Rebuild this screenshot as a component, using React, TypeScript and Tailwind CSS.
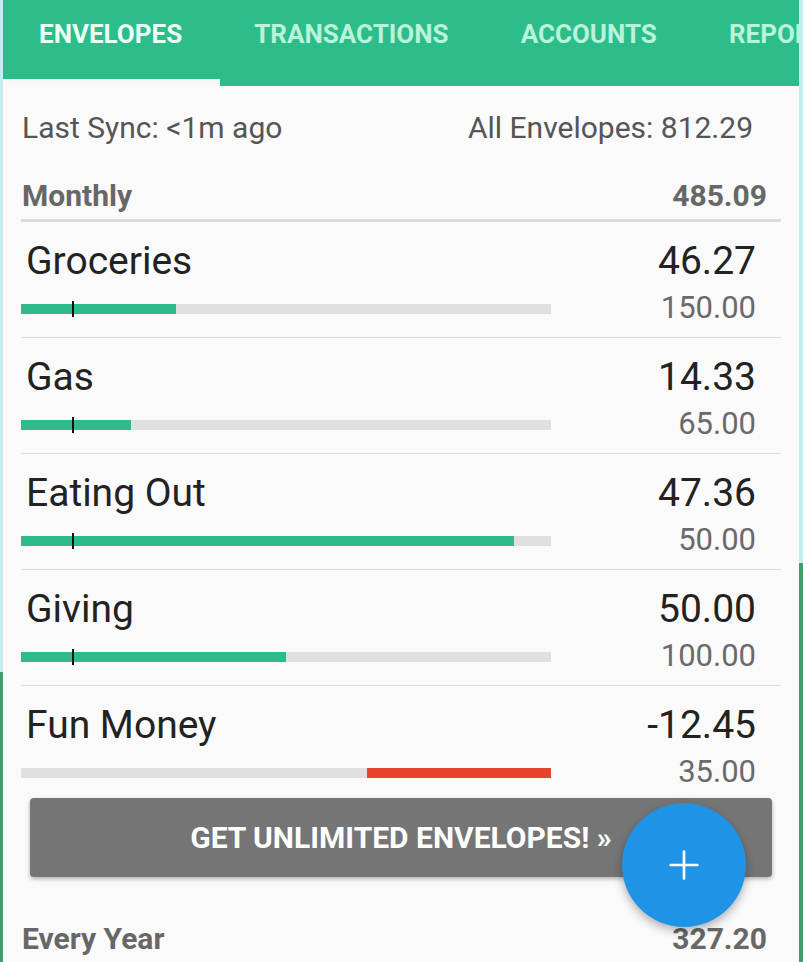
import { Plus } from 'lucide-react'

interface Envelope {
  name: string
  amount: string
  budget: string
  fill: number
  over?: boolean
}

const envelopes: Envelope[] = [
  { name: 'Groceries', amount: '46.27', budget: '150.00', fill: 155 },
  { name: 'Gas', amount: '14.33', budget: '65.00', fill: 110 },
  { name: 'Eating Out', amount: '47.36', budget: '50.00', fill: 493 },
  { name: 'Giving', amount: '50.00', budget: '100.00', fill: 265 },
  { name: 'Fun Money', amount: '-12.45', budget: '35.00', fill: 184, over: true },
]

const tabs = ['ENVELOPES', 'TRANSACTIONS', 'ACCOUNTS', 'REPORTS']

const EnvelopeRow = ({ env, last }: { env: Envelope; last: boolean }) => {
  return (
    <div className={`mx-[18px] pt-[16px] ${last ? 'pb-0' : 'pb-[7px] border-b border-[#dcdcdc]'}`}>
      <div className="flex h-[46px] items-center justify-between pl-[5px] pr-[25px] text-[39px] leading-none text-[#222]">
        <span>{env.name}</span>
        <span>{env.amount}</span>
      </div>
      <div className="flex h-[46px] items-center justify-between pr-[25px]">
        <div className="relative mt-[4px] h-[10px] w-[530px] bg-[#e0e0e0]">
          {env.over ? (
            <div className="absolute right-0 top-0 h-full bg-[#e8432f]" style={{ width: env.fill }} />
          ) : (
            <>
              <div className="absolute left-0 top-0 h-full bg-[#2dbb89]" style={{ width: env.fill }} />
              <div className="absolute left-[51px] top-[-3px] h-[16px] w-[2px] bg-[#111]" />
            </>
          )}
        </div>
        <span className="text-[31px] leading-none text-[#6a6a6a]">{env.budget}</span>
      </div>
    </div>
  )
}

export default function App() {
  return (
    <div className="flex h-[962px] w-[803px] overflow-hidden bg-[#fafafa] font-['Roboto','Liberation_Sans',sans-serif]">
      {/* left edge strip */}
      <div className="flex w-[3px] shrink-0 flex-col">
        <div className="h-[672px] bg-[#c6eef1]" />
        <div className="flex-1 bg-[#3f9d6b]" />
      </div>

      <div className="relative flex w-[796px] flex-col">
        {/* tab bar */}
        <div className="flex h-[86px] flex-col overflow-hidden bg-[#2dbd8a]">
          <div className="flex h-[79px]">
            {tabs.map((t, i) => (
              <div
                key={t}
                className={`whitespace-nowrap px-[36px] pt-[20px] text-[26px] font-bold leading-[28px] ${
                  i === 0 ? 'text-[#eafff6]' : 'text-[#b8f3da]'
                }`}
              >
                {t}
              </div>
            ))}
          </div>
          <div className="h-[7px] w-[217px] bg-[#f8f8f8]" />
        </div>

        {/* sync line */}
        <div className="flex h-[82px] items-center justify-between pl-[19px] pr-[46px] text-[30px] text-[#555]">
          <span>Last Sync: &lt;1m ago</span>
          <span>All Envelopes: 812.29</span>
        </div>

        {/* Monthly header */}
        <div className="mx-[18px] flex justify-between border-b-[3px] border-[#dcdcdc] pb-[8px] pl-[1px] pr-[14px] pt-[13px] text-[30px] font-bold leading-[30px] text-[#676767]">
          <span>Monthly</span>
          <span>485.09</span>
        </div>

        {envelopes.map((env, i) => (
          <EnvelopeRow key={env.name} env={env} last={i === envelopes.length - 1} />
        ))}

        {/* upgrade button */}
        <div className="ml-[27px] mr-[27px] mt-[4px] flex h-[79px] items-center justify-center rounded-[4px] bg-[#757575] text-[30px] font-bold text-white shadow-[0_2px_4px_rgba(0,0,0,0.3)]">
          GET UNLIMITED ENVELOPES! »
        </div>

        {/* Every Year header */}
        <div className="mx-[18px] mt-[41px] flex h-[40px] items-center justify-between pl-[1px] pr-[14px] text-[30px] font-bold text-[#676767]">
          <span>Every Year</span>
          <span>327.20</span>
        </div>

        {/* floating add button */}
        <div className="absolute left-[619px] top-[803px] flex h-[124px] w-[124px] items-center justify-center rounded-full bg-[#1f93e5] shadow-[0_4px_10px_rgba(0,0,0,0.3)]">
          <Plus className="h-[46px] w-[46px] text-white" strokeWidth={1.4} />
        </div>
      </div>

      {/* right edge strip */}
      <div className="flex w-[4px] shrink-0 flex-col">
        <div className="h-[563px] bg-[#c6eef1]" />
        <div className="flex-1 bg-[#3f9d6b]" />
      </div>
    </div>
  )
}
